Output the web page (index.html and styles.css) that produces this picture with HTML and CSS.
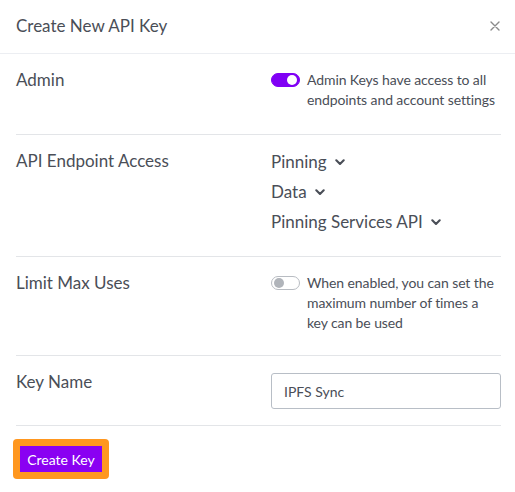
FILE: index.html
```html
<!DOCTYPE html>
<html>
<head>
<meta charset="utf-8">
<link rel="stylesheet" href="styles.css">
</head>
<body>
<div class="modal">
  <div class="modal-header">
    <span class="modal-title">Create New API Key</span>
    <button class="close" aria-label="Close">
      <svg width="10" height="10" viewBox="0 0 10 10"><path d="M1 1L9 9M9 1L1 9" stroke="#8a8a8a" stroke-width="1.4" stroke-linecap="round"/></svg>
    </button>
  </div>
  <div class="modal-body">
    <div class="row row-admin">
      <div class="label">Admin</div>
      <div class="switch-line">
        <span class="switch on"><span class="knob"></span></span>
        <span class="desc">Admin Keys have access to all endpoints and account settings</span>
      </div>
    </div>
    <div class="row row-endpoint">
      <div class="label">API Endpoint Access</div>
      <div class="dropdowns">
        <div class="dropdown">Pinning <svg class="chev" width="10" height="7" viewBox="0 0 10 7"><path d="M1.3 1.3L5 5L8.7 1.3" fill="none" stroke="#4a4e57" stroke-width="2.1" stroke-linecap="round" stroke-linejoin="round"/></svg></div>
        <div class="dropdown">Data <svg class="chev" width="10" height="7" viewBox="0 0 10 7"><path d="M1.3 1.3L5 5L8.7 1.3" fill="none" stroke="#4a4e57" stroke-width="2.1" stroke-linecap="round" stroke-linejoin="round"/></svg></div>
        <div class="dropdown">Pinning Services API <svg class="chev" width="10" height="7" viewBox="0 0 10 7"><path d="M1.3 1.3L5 5L8.7 1.3" fill="none" stroke="#4a4e57" stroke-width="2.1" stroke-linecap="round" stroke-linejoin="round"/></svg></div>
      </div>
    </div>
    <div class="row row-limit">
      <div class="label">Limit Max Uses</div>
      <div class="switch-line">
        <span class="switch off"><span class="knob"></span></span>
        <span class="desc">When enabled, you can set the maximum number of times a key can be used</span>
      </div>
    </div>
    <div class="row row-name">
      <div class="label">Key Name</div>
      <div><input class="input" type="text" value="IPFS Sync"></div>
    </div>
    <div class="footer">
      <span class="focus-ring"><button class="btn-primary">Create Key</button></span>
    </div>
  </div>
</div>
</body>
</html>
```
FILE: styles.css
```css
* { box-sizing: border-box; }
html, body { margin: 0; padding: 0; background: #fff; }
body {
  font-family: Lato, "Open Sans", sans-serif;
  color: #4a4e57;
}
.modal { width: 515px; background: #fff; }
.modal-header {
  height: 54px;
  display: flex;
  align-items: center;
  justify-content: space-between;
  padding: 0 14px 1px 16px;
  border-bottom: 1px solid #eceef2;
}
.modal-title { font-size: 17px; line-height: 24px; color: #4a4e57; }
.close {
  border: 0; background: none; padding: 0; margin-right: 0;
  width: 12px; height: 12px; display: flex; align-items: center; justify-content: center;
}
.modal-body { padding: 0 14px 0 16px; }
.row {
  display: grid;
  grid-template-columns: 255px 1fr;
  border-bottom: 1px solid #e3e5e8;
  padding: 14px 0 23px;
}
.row-admin { padding-bottom: 24px; }
.row-endpoint { padding-bottom: 22px; }
.row-limit { padding-bottom: 22px; }
.row-name { padding-bottom: 16px; }
.label { font-size: 17px; line-height: 24px; }
.switch-line { display: flex; align-items: flex-start; padding-top: 2px; }
.desc { font-size: 14px; line-height: 20px; margin-left: 7px; letter-spacing: -0.1px; }
.switch {
  flex: none;
  width: 29px; height: 14px; margin-top: 3px;
  border-radius: 7px;
  display: flex; align-items: center;
  padding: 0 2px;
}
.switch .knob { width: 10px; height: 10px; border-radius: 50%; }
.switch.on { background: #8000f5; border: 1px solid #8000f5; justify-content: flex-end; }
.switch.on .knob { background: #fff; }
.switch.off { background: #fff; border: 1px solid #b8bcc2; justify-content: flex-start; }
.switch.off .knob { background: #b0b4ba; }
.dropdowns { display: flex; flex-direction: column; gap: 6px; padding-top: 1px; }
.dropdown { font-size: 17px; line-height: 24px; display: flex; align-items: center; }
.chev { margin-left: 8px; }
.input {
  display: block;
  width: 230px; height: 36px; margin-top: 3px;
  border: 1px solid #b8bec6; border-radius: 3px;
  padding: 0 12px;
  font-family: inherit; font-size: 14px; color: #4a4e57;
  outline: none;
}
.footer { padding: 13px 0 13px 0; }
.focus-ring {
  display: inline-block;
  margin-left: -3px;
  background: #ff971f;
  border-radius: 4px;
  padding: 7px;
  line-height: 0;
}
.btn-primary {
  height: 26px; width: 82px;
  border: 0; border-radius: 0;
  background: #8a00f2;
  color: #fff;
  font-family: inherit; font-size: 14px;
  padding: 0;
}
```
